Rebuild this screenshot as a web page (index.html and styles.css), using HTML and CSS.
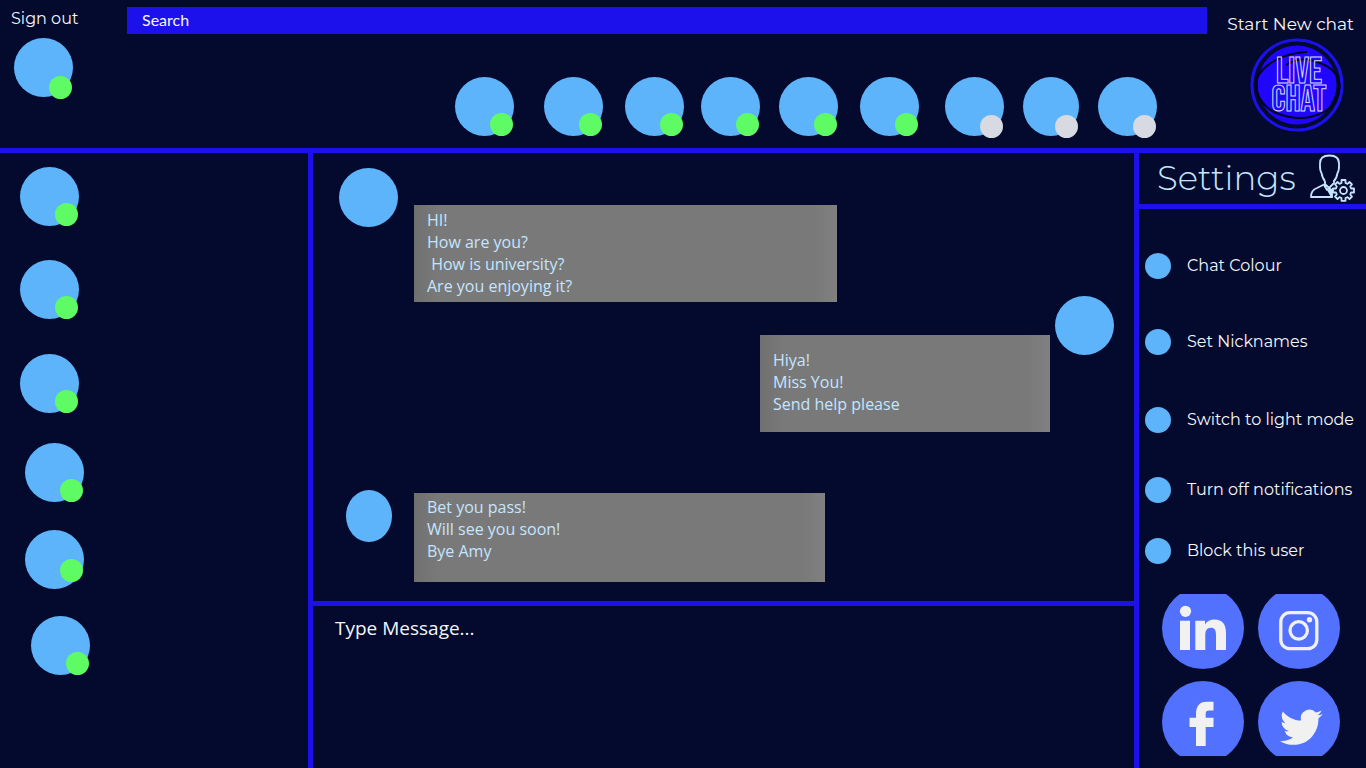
FILE: index.html
```html
<!DOCTYPE html>
<html lang="en">
<head>
<meta charset="utf-8">
<meta name="viewport" content="width=device-width, initial-scale=1">
<title>Live Chat</title>
<link rel="stylesheet" href="styles.css">
</head>
<body>
<div class="app">
  <header class="topbar">
    <div class="account">
      <button class="text-button" type="button">Sign out</button>
      <button class="avatar account-avatar" type="button" aria-label="My profile"><span class="status"></span></button>
    </div>
    <div class="top-center">
      <input class="search" type="search" placeholder="Search" aria-label="Search">
      <nav class="contacts" aria-label="Contacts">
        <button class="avatar" type="button" aria-label="Contact 1, online"><span class="status"></span></button>
        <button class="avatar" type="button" aria-label="Contact 2, online"><span class="status"></span></button>
        <button class="avatar" type="button" aria-label="Contact 3, online"><span class="status"></span></button>
        <button class="avatar" type="button" aria-label="Contact 4, online"><span class="status"></span></button>
        <button class="avatar" type="button" aria-label="Contact 5, online"><span class="status"></span></button>
        <button class="avatar" type="button" aria-label="Contact 6, online"><span class="status"></span></button>
        <button class="avatar" type="button" aria-label="Contact 7, offline"><span class="status status-away"></span></button>
        <button class="avatar avatar-slim" type="button" aria-label="Contact 8, offline"><span class="status status-away"></span></button>
        <button class="avatar" type="button" aria-label="Contact 9, offline"><span class="status status-away"></span></button>
      </nav>
    </div>
    <div class="brand">
      <button class="text-button new-chat" type="button">Start New chat</button>
      <a class="logo" href="#" aria-label="Live Chat home">
        <svg width="94" height="94" viewBox="0 0 94 94">
          <circle cx="47" cy="47" r="45" fill="none" stroke="#1c11eb" stroke-width="3"/>
          <circle cx="47" cy="47" r="39.500" fill="#2106ff"/>
          <path d="M7 40C4 55 12 70 29 76C50 84 75 80 86 62C95 44 86 31 70 25C59 20 46 20 36 27" fill="none" stroke="#01051f" stroke-width="2"/>
          <path d="M7 40C14 26 33 15 57 14" fill="none" stroke="#01051f" stroke-width="2"/>
          <path d="M7 41C4 57 13 72 30 78L22 74C11 67 4 56 7 41ZM87 34C92 47 88 60 79 68C86 58 90 47 87 34Z" fill="#01051f"/>
          <g class="logo-text" text-anchor="middle">
            <text x="49" y="45">LIVE</text>
            <text x="49" y="73">CHAT</text>
          </g>
        </svg>
      </a>
    </div>
  </header>

  <aside class="friends" aria-label="Friends">
    <button class="avatar" type="button" aria-label="Friend 1"><span class="status"></span></button>
    <button class="avatar" type="button" aria-label="Friend 2"><span class="status"></span></button>
    <button class="avatar" type="button" aria-label="Friend 3"><span class="status"></span></button>
    <button class="avatar indent" type="button" aria-label="Friend 4"><span class="status"></span></button>
    <button class="avatar indent" type="button" aria-label="Friend 5"><span class="status status-high"></span></button>
    <button class="avatar indent-deep" type="button" aria-label="Friend 6"><span class="status"></span></button>
  </aside>

  <main class="chat">
    <section class="thread" aria-label="Conversation">
      <article class="message">
        <div class="face"><span class="avatar"></span></div>
        <p class="bubble bubble-wide">HI!
How are you?
 How is university?
Are you enjoying it?</p>
      </article>
      <article class="message message-own">
        <p class="bubble bubble-own">Hiya!
Miss You!
Send help please</p>
        <div class="face"><span class="avatar"></span></div>
      </article>
      <article class="message message-last">
        <div class="face"><span class="avatar avatar-small"></span></div>
        <p class="bubble bubble-last">Bet you pass!
Will see you soon!
Bye Amy</p>
      </article>
    </section>
    <textarea class="compose" placeholder="Type Message..." aria-label="Type Message"></textarea>
  </main>

  <aside class="settings">
    <div class="settings-head">
      <h1>Settings</h1>
      <svg width="46" height="48" viewBox="0 0 46 48" fill="none" stroke="#c5e5ff" stroke-width="1.800" stroke-linejoin="round" aria-hidden="true">
        <path d="M16 27C14 25 13 22 12.500 19C10.500 16 11 13 11 9.500C11 4 14 1.500 20.500 1.500S30 4 30 9.500C30 13 30.500 16 28.500 19C28 22 27 25 25 27M16 27V30L8 34Q2 36 2 43H23L19 36"/>
        <path d="M16 30L20 34L25 29V26M15 31L18 36L20 34L23 36"/>
        <path d="M20.500 36L23 43V36Z" fill="#c5e5ff"/>
        <path d="M32.500 29V26H36.500V29L38.500 29.800L40.500 28L43 30.500L41.200 32.500L42 34.500H45V38.500H42L41.200 40.500L43 42.500L40.500 45L38.500 43.200L36.500 44V46.800H32.500V44L30.500 43.200L28.500 45L26 42.500L27.800 40.500L27 38.500H24V34.500H27L27.800 32.500L26 30.500L28.500 28L30.500 29.800Z"/>
        <circle cx="34.500" cy="36.500" r="3.500"/>
      </svg>
    </div>
    <div class="options">
      <button class="option" type="button"><span class="dot"></span>Chat Colour</button>
      <button class="option" type="button"><span class="dot"></span>Set Nicknames</button>
      <button class="option" type="button"><span class="dot"></span>Switch to light mode</button>
      <button class="option" type="button"><span class="dot"></span>Turn off notifications</button>
      <button class="option" type="button"><span class="dot"></span>Block this user</button>
    </div>
    <nav class="social" aria-label="Social media">
      <a href="#" aria-label="LinkedIn">
        <svg width="82" height="75" viewBox="0 0 82 75">
          <circle cx="41" cy="34" r="41" fill="#5271ff"/>
          <g fill="#f1f1f2">
            <circle cx="23.500" cy="17.300" r="5.600"/>
            <path d="M18 26.700H28V56H18Z"/>
            <path d="M33.300 26.700H43V30.500C45 27.300 48 25.600 52.500 25.600C60.500 25.600 64 30.500 64 39V56H54V41C54 36 52.500 33.700 49 33.700C45 33.700 43.300 36.500 43.300 41V56H33.300Z"/>
          </g>
        </svg>
      </a>
      <a href="#" aria-label="Instagram">
        <svg width="82" height="75" viewBox="0 0 82 75">
          <circle cx="41" cy="34" r="41" fill="#5271ff"/>
          <g fill="none" stroke="#f1f1f2" stroke-width="3.300">
            <rect x="22.800" y="18.700" width="36" height="36" rx="9"/>
            <circle cx="40.700" cy="36.400" r="8.700"/>
          </g>
          <circle cx="51.500" cy="25.700" r="2.700" fill="#f1f1f2"/>
        </svg>
      </a>
      <a href="#" aria-label="Facebook">
        <svg width="82" height="75" viewBox="0 0 82 75">
          <circle cx="41" cy="41" r="41" fill="#5271ff"/>
          <path d="M34 65V46H27.500V36.700H34V33C34 25 37.500 20.700 44.500 20.700H51.500V29.400H47C44.700 29.400 43.700 30.500 43.700 32.500V36.700H51.500V46H43.700V65Z" fill="#f1f1f2"/>
        </svg>
      </a>
      <a href="#" aria-label="Twitter">
        <svg width="82" height="75" viewBox="0 0 82 75">
          <circle cx="41" cy="41" r="41" fill="#5271ff"/>
          <path transform="translate(22 24.700) scale(1.780 1.800)" fill="#f1f1f2" d="M23.953 4.570a10 10 0 01-2.825.775 4.958 4.958 0 002.163-2.723c-.951.555-2.005.959-3.127 1.184a4.920 4.920 0 00-8.384 4.482C7.690 8.095 4.067 6.130 1.640 3.162a4.822 4.822 0 00-.666 2.475c0 1.710.870 3.213 2.188 4.096a4.904 4.904 0 01-2.228-.616v.060a4.923 4.923 0 003.946 4.827 4.996 4.996 0 01-2.212.085 4.936 4.936 0 004.604 3.417 9.867 9.867 0 01-6.102 2.105c-.390 0-.779-.023-1.170-.067a13.995 13.995 0 007.557 2.209c9.053 0 13.998-7.496 13.998-13.985 0-.210 0-.420-.015-.630A9.935 9.935 0 0024 4.590z"/>
        </svg>
      </a>
    </nav>
  </aside>
</div>
</body>
</html>
```
FILE: styles.css
```css
* {
  box-sizing: border-box;
}

body {
  margin: 0;
  background: #030a2d;
  color: #f4f6fb;
  font-family: Montserrat, Inter, "Open Sans", sans-serif;
  font-size: 16px;
  line-height: 22px;
}

button,
input,
textarea {
  margin: 0;
  padding: 0;
  border: 0;
  background: none;
  color: inherit;
  font: inherit;
}

button {
  cursor: pointer;
}

.app {
  display: grid;
  grid-template-columns: 308px minmax(0, 1fr) 227px;
  grid-template-rows: auto 1fr;
  min-height: 100vh;
}

/* Top bar */

.topbar {
  grid-column: 1 / -1;
  display: flex;
  min-height: 153px;
  border-bottom: 5px solid #1c11eb;
}

.account {
  flex: 0 0 127px;
  display: flex;
  flex-direction: column;
  align-items: flex-start;
  gap: 8px;
  padding: 8px 0 0 11px;
}

.text-button {
  white-space: nowrap;
}

.new-chat {
  font-size: 17px;
}

.account-avatar {
  margin-left: 3px;
}

.top-center {
  flex: 1;
  display: flex;
  flex-direction: column;
  gap: 43px;
  padding-top: 7px;
}

.search {
  width: 100%;
  height: 27px;
  padding: 0 15px 2px;
  background: #1c11eb;
  font-family: Lato, sans-serif;
  font-size: 16px;
}

.search::placeholder,
.compose::placeholder {
  color: #f4f6fb;
  opacity: 1;
}

.contacts {
  display: grid;
  grid-template-columns: 89px 81px 76px 78px 81px 85px 78px 75px 59px;
  justify-content: end;
  padding-right: 50px;
}

.brand {
  flex: 0 0 159px;
  display: flex;
  flex-direction: column;
  align-items: flex-end;
  gap: 3px;
  padding: 13px 12px 0 0;
}

.logo {
  margin-right: 10px;
}

.logo svg,
.social svg {
  display: block;
}

.logo-text {
  fill: none;
  stroke: #d3d8ff;
  stroke-width: 1;
  font-family: "Bebas Neue", "League Gothic", "Liberation Sans Narrow", sans-serif;
  font-size: 36px;
}

/* Avatars */

.avatar {
  position: relative;
  display: block;
  width: 59px;
  height: 59px;
  border-radius: 50%;
  background: #5eb4fb;
}

.avatar-slim {
  width: 56px;
}

.avatar-small {
  width: 46px;
  height: 52px;
}

.status {
  position: absolute;
  right: 1px;
  top: 36px;
  width: 23px;
  height: 23px;
  border-radius: 50%;
  background: #5efb64;
}

.account-avatar .status,
.status-away {
  top: 38px;
}

.status-away {
  background: #d7dae3;
}

.friends {
  display: grid;
  grid-template-rows: 93px 94px 89px 87px 86px 59px;
  align-content: start;
  padding: 14px 20px;
}

.friends .status-high {
  top: 29px;
}

.indent {
  margin-left: 5px;
}

.indent-deep {
  margin-left: 11px;
}

/* Conversation */

.chat {
  display: grid;
  grid-template-rows: 1fr 167px;
  border: solid #1c11eb;
  border-width: 0 5px;
}

.thread {
  padding: 15px 20px 19px 26px;
}

.message {
  display: flex;
  align-items: flex-start;
  gap: 16px;
}

.message-own {
  justify-content: flex-end;
  gap: 5px;
  margin-top: -6px;
}

.message-last {
  margin-top: 58px;
}

.face {
  flex: 0 0 59px;
  display: flex;
  justify-content: center;
}

.bubble {
  max-width: 100%;
  min-height: 97px;
  margin: 37px 0 0;
  padding: 4px 13px;
  background: linear-gradient(90deg, #707070, #797979 24px, #797979 calc(100% - 24px), #808080);
  color: #c5e5ff;
  font-family: "Open Sans", sans-serif;
  white-space: pre-wrap;
}

.bubble-wide {
  width: 423px;
}

.bubble-own {
  width: 290px;
  margin-top: 39px;
  padding-top: 14px;
}

.bubble-last {
  width: 411px;
  min-height: 89px;
  margin-top: 3px;
  padding-top: 3px;
}

.compose {
  display: block;
  width: 100%;
  padding: 9px 22px;
  border-top: 5px solid #1c11eb;
  font-family: "Open Sans", sans-serif;
  font-size: 19px;
  line-height: 26px;
  resize: none;
}

/* Settings */

.settings-head {
  display: flex;
  align-items: center;
  justify-content: space-between;
  height: 56px;
  padding: 0 11px 2px 18px;
  border-bottom: 5px solid #1c11eb;
  color: #c5e5ff;
}

.settings-head h1 {
  margin: 0;
  font-size: 34px;
  font-weight: 300;
  line-height: 44px;
}

.options {
  display: grid;
  grid-template-rows: 76px 78px 70px 61px 26px;
  padding: 44px 6px 30px;
}

.option {
  display: flex;
  align-items: center;
  align-self: start;
  gap: 16px;
  height: 26px;
  text-align: left;
  white-space: nowrap;
}

.dot {
  flex: none;
  width: 26px;
  height: 26px;
  border-radius: 50%;
  background: #5eb4fb;
}

.social {
  display: grid;
  grid-template-columns: 82px 82px;
  gap: 12px 14px;
  padding-left: 23px;
}
```
